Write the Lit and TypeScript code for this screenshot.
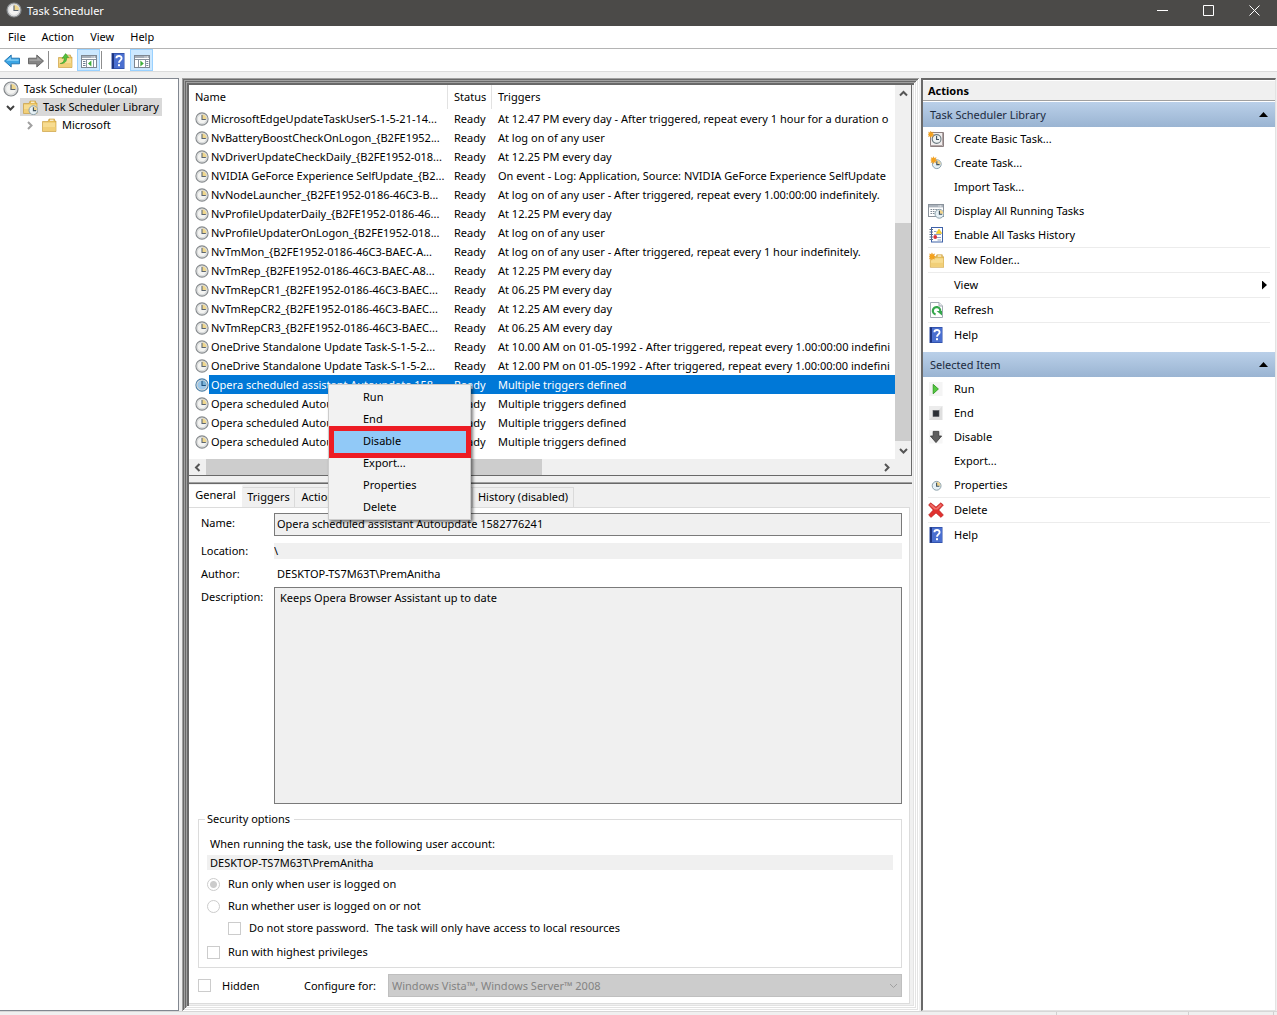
import { LitElement, html, css, svg, nothing, TemplateResult } from "lit";
import { customElement, property } from "lit/decorators.js";
import { classMap } from "lit/directives/class-map.js";

const clock = (face: string, slice: string, rim: string, hands: string) => svg`
  <circle cx="8" cy="8" r="7" fill="#e3e4e4" stroke=${rim} stroke-width="1.2"/>
  <circle cx="8" cy="8" r="5.4" fill=${face} stroke="#c4c8ca" stroke-width=".6"/>
  <path d="M8 8V2.8A5.2 5.2 0 0 1 13.2 8Z" fill=${slice}/>
  <path d="M8 3.4V8.5H12.4" fill="none" stroke=${hands} stroke-width="1.2"/>`;

const smallClock = (x: number, y: number) => svg`
  <circle cx=${x} cy=${y} r="4.4" fill="#e6f0f5" stroke="#8ba0aa"/>
  <path d="M${x} ${y}V${y - 3.8}A3.8 3.8 0 0 1 ${x + 3.8} ${y}Z" fill="#f3d48a"/>
  <path d="M${x} ${y - 3}V${y + 0.4}H${x + 2.8}" fill="none" stroke="#3d505c" stroke-width="1.1"/>`;

const folder = svg`
  <path d="M1.5 4.5H7L8 2H13.5V4H15V14.5H1.5Z" fill="#e6bd58" stroke="#c79b3a" stroke-width=".6"/>
  <path d="M9 3.2H12.5" stroke="#fff" stroke-width="1"/>
  <path d="M2 5.4H14.4V14H2Z" fill="#f7dc91"/>
  <path d="M2 10H14.4V14H2Z" fill="#f1cf78"/>`;

const star = svg`<path d="M4 0L5.1 2.4 7.8 1.3 6.7 3.9 9 5 6.6 6 7.5 8.6 5 7.6 3.8 10 2.9 7.5.4 8.4 1.5 5.9 0 4.8 1.5 3.8.7 1.4 3 2.4Z" fill="#f5a21c" stroke="#e48e12" stroke-width=".4"/>`;

const helpBook = svg`
  <path d="M1.5 0H14.5V16H1.5Z" fill="#2f4ea6"/>
  <path d="M4 .8H14V15.2H4Z" fill="#4a6fd0"/>
  <path d="M2 .5H4V15.5H2Z" fill="#1f3580"/>
  <path d="M6.4 5.2C6.4 2.4 11.6 2.2 11.6 5.2 11.6 7.4 9 7.4 9 9.8" fill="none" stroke="#fff" stroke-width="1.9"/>
  <rect x="8" y="11.2" width="2" height="2" fill="#fff"/>`;

const paneWindow = (arrow: string, divider: string, list: string) => svg`
  <rect x=".5" y="2.5" width="15" height="12" fill="#fff" stroke="#7e8792"/>
  <path d="M1 3H15V5H1Z" fill="#a4adb8"/>
  <path d="M10.5 4H11.5M12.5 4H14" stroke="#fff"/>
  <path d="M1 6.5H15" stroke="#8993a0"/>
  <path d=${divider} stroke="#8993a0"/>
  <path d=${list} stroke="#6f7f93"/>
  <path d=${arrow} fill="#3fae3a"/>`;

const arrowShape = "M.5 8L7.2 2V5.2H15.5V10.8H7.2V14Z";

const icons: Record<string, TemplateResult> = {
  clock: clock("#f3f3f1", "#efd78e", "#85898c", "#5c6670"),
  clockSelected: clock("#9cc8ea", "#79b2d8", "#4a7ea6", "#1f4e78"),
  folder,
  libraryFolder: svg`${folder}${smallClock(11.4, 11.2)}`,
  back: svg`<path d=${arrowShape} fill="#3aa5e4" stroke="#1d6fae" stroke-width=".9"/><path d="M2.4 7.8L6.8 4V6.4H14.6V7.8Z" fill="#8bd2f7"/>`,
  forward: svg`<g transform="matrix(-1 0 0 1 16 0)"><path d=${arrowShape} fill="#858585" stroke="#5f5f5f" stroke-width=".9"/><path d="M2.4 7.8L6.8 4V6.4H14.6V7.8Z" fill="#a9a9a9"/></g>`,
  upFolder: svg`${folder}<path d="M3.2 10.5C6.2 10 7.4 8 7.2 4.8L5 5.4 8.6.6 11.8 4.4 9.6 4.5C10 8.4 7.6 11 3.2 10.5Z" fill="#54c23c" stroke="#2f8f22" stroke-width=".5"/>`,
  treePane: paneWindow("M10.4 7.6V13.4L7 10.5Z", "M5.5 7V14M12.5 7V14", "M2 8.5H4.5M2 10.5H4.5M2 12.5H4.5"),
  actionPane: paneWindow("M6.4 7.6V13.4L9.8 10.5Z", "M4.5 7V14M11.5 7V14", "M12.3 8.5H14.3M12.3 10.5H14.3M12.3 12.5H14.3"),
  help: helpBook,
  basicTask: svg`<path d="M2.5 1.5H15.5V15.5H2.5Z" fill="#f1eeee" stroke="#8b7f80"/><path d="M2.5 14.5H14.5V2" fill="none" stroke="#b3a6a6"/><circle cx="8.6" cy="8" r="4.4" fill="#eef2f3" stroke="#6b7a80" stroke-width="1.1"/><path d="M8.6 5V8.5H11" fill="none" stroke="#3d505c" stroke-width="1.1"/><g transform="scale(.68)">${star}</g>`,
  createTask: svg`${smallClock(8.8, 9.2)}<g transform="translate(2.6 1.6) scale(.72)">${star}</g>`,
  running: svg`<rect x=".5" y="1.5" width="15" height="12" fill="#fff" stroke="#8a929b"/><path d="M1 2H15V4.4H1Z" fill="#aab2bb"/><path d="M10.5 3H14" stroke="#fff" stroke-dasharray="1 .6"/><path d="M2.5 6.5H10M2.5 8.5H7M2.5 10.5H7" stroke="#7e8994" stroke-dasharray="1.6 .8"/>${smallClock(11.4, 10.8)}`,
  history: svg`<rect x="3.5" y=".5" width="11" height="14.5" fill="#fff" stroke="#3f62a8"/><path d="M1.5 2.5H5M1.5 5H5M1.5 7.5H5M1.5 10H5M1.5 12.5H5" stroke="#5b6b82" stroke-width="1.1"/><path d="M6 4.5H8.5M6 7.5H13M6 10.5H13M9.5 13H13" stroke="#8da0c0"/><path d="M11 2L13.8 6.4H8.2Z" fill="#f7d429" stroke="#d8a90f" stroke-width=".5"/><circle cx="7.2" cy="10" r="1.9" fill="#d8333a"/>`,
  newFolder: svg`<g transform="translate(.8 .8)">${folder}</g><g transform="translate(1 .8) scale(.74)">${star}</g>`,
  refresh: svg`<path d="M2.5.5H11L14.5 4V15.5H2.5Z" fill="#fff" stroke="#a3abb3"/><path d="M11 .5V4H14.5" fill="#e8ecef" stroke="#a3abb3"/><path d="M7.6 12.4A3.7 3.7 0 1 1 12.2 9.4" fill="none" stroke="#33a64a" stroke-width="2.2"/><path d="M8.6 9H14V13.6Z" fill="#33a64a"/>`,
  run: svg`<rect x="1" y="1" width="13.5" height="14" fill="#f4f4f4"/><path d="M5.2 3.4L10.4 8 5.2 12.8Z" fill="#55c940" stroke="#2f9a22" stroke-width=".9"/>`,
  end: svg`<rect x="1" y="1" width="13.5" height="14" fill="#dfdfdf"/><path d="M1 1H14.5L1 15Z" fill="#ececec"/><rect x="5" y="5.5" width="6" height="6" fill="#2c2f35" stroke="#55585e" stroke-width=".6"/>`,
  disable: svg`<rect x="1" y="1" width="13.5" height="13.5" fill="#f6f6f6"/><path d="M5.2 2.4H10.8V7H13.6L8 13.6 2.4 7H5.2Z" fill="#5d5d5d" stroke="#333" stroke-width=".8"/>`,
  properties: smallClock(8.6, 8.8),
  remove: svg`<path d="M2.6.8L8 5 12.8.8 15.4 3 10.8 8 15.4 13 13 15.4 8 11 3 15.4.6 13 5.2 8 .6 3Z" fill="#e0312f" stroke="#b51d1d" stroke-width=".6"/><path d="M2.7 1.8L8 6.2 12.8 1.9 14 3.1 9.6 7.6H6.4L1.8 3.1Z" fill="#f0726c"/>`,
};

const icon = (name: string) =>
  html`<svg class="icon" viewBox="0 0 16 16" aria-hidden="true">${icons[name]}</svg>`;

const chevron = (dir: "up" | "down" | "left" | "right" | "thin") => {
  const paths = {
    up: "M1 6.5L4.5 3 8 6.5",
    down: "M1 3L4.5 6.5 8 3",
    left: "M6.5 1L3 4.5 6.5 8",
    right: "M3 1L6.5 4.5 3 8",
    thin: "M1 3L4.5 6.5 8 3",
  };
  return html`<svg class="chevron" viewBox="0 0 9 9" aria-hidden="true">
    <path d=${paths[dir]} fill="none" stroke="currentColor" stroke-width=${dir === "thin" ? 1 : 2}></path>
  </svg>`;
};

const reset = css`
  * { box-sizing: border-box; }
  button, input, textarea, select {
    font: inherit; color: inherit; border: 0; margin: 0; padding: 0;
    background: none; border-radius: 0; text-align: left; outline: none;
  }
  ul { list-style: none; margin: 0; padding: 0; }
  .icon { width: 16px; height: 16px; flex: none; display: block; }
  .chevron { width: 9px; height: 9px; display: block; }
`;

interface Task { name: string; trigger: string; selected?: boolean; }

const TASKS: Task[] = [
  { name: "MicrosoftEdgeUpdateTaskUserS-1-5-21-14...", trigger: "At 12.47 PM every day - After triggered, repeat every 1 hour for a duration o" },
  { name: "NvBatteryBoostCheckOnLogon_{B2FE1952...", trigger: "At log on of any user" },
  { name: "NvDriverUpdateCheckDaily_{B2FE1952-018...", trigger: "At 12.25 PM every day" },
  { name: "NVIDIA GeForce Experience SelfUpdate_{B2...", trigger: "On event - Log: Application, Source: NVIDIA GeForce Experience SelfUpdate" },
  { name: "NvNodeLauncher_{B2FE1952-0186-46C3-B...", trigger: "At log on of any user - After triggered, repeat every 1.00:00:00 indefinitely." },
  { name: "NvProfileUpdaterDaily_{B2FE1952-0186-46...", trigger: "At 12.25 PM every day" },
  { name: "NvProfileUpdaterOnLogon_{B2FE1952-018...", trigger: "At log on of any user" },
  { name: "NvTmMon_{B2FE1952-0186-46C3-BAEC-A...", trigger: "At log on of any user - After triggered, repeat every 1 hour indefinitely." },
  { name: "NvTmRep_{B2FE1952-0186-46C3-BAEC-A8...", trigger: "At 12.25 PM every day" },
  { name: "NvTmRepCR1_{B2FE1952-0186-46C3-BAEC...", trigger: "At 06.25 PM every day" },
  { name: "NvTmRepCR2_{B2FE1952-0186-46C3-BAEC...", trigger: "At 12.25 AM every day" },
  { name: "NvTmRepCR3_{B2FE1952-0186-46C3-BAEC...", trigger: "At 06.25 AM every day" },
  { name: "OneDrive Standalone Update Task-S-1-5-2...", trigger: "At 10.00 AM on 01-05-1992 - After triggered, repeat every 1.00:00:00 indefini" },
  { name: "OneDrive Standalone Update Task-S-1-5-2...", trigger: "At 12.00 PM on 01-05-1992 - After triggered, repeat every 1.00:00:00 indefini" },
  { name: "Opera scheduled assistant Autoupdate 158...", trigger: "Multiple triggers defined", selected: true },
  { name: "Opera scheduled Autoupdate 158...", trigger: "Multiple triggers defined" },
  { name: "Opera scheduled Autoupdate 158...", trigger: "Multiple triggers defined" },
  { name: "Opera scheduled Autoupdate 158...", trigger: "Multiple triggers defined" },
];

@customElement("task-list")
export class TaskList extends LitElement {
  static styles = [reset, css`
    :host {
      display: grid; grid-template-columns: minmax(0, 1fr) 16px; grid-template-rows: 374px 16px;
      background: #f0f0f0; border: solid #696969; border-width: 0 1px 1px 0;
    }
    .rows { background: #fff; overflow: hidden; }
    table { width: 100%; table-layout: fixed; border-collapse: separate; border-spacing: 0; }
    .c-icon { width: 20px; }
    .c-name { width: 239px; }
    .c-status { width: 44px; }
    th { height: 24px; padding: 0 0 0 6px; font-weight: normal; text-align: left; border-right: 1px solid #e2e2e2; }
    th:last-child { border-right: 0; }
    td { height: 19px; padding: 0 0 0 6px; line-height: 18px; white-space: nowrap; overflow: hidden; }
    .mark { padding: 0; }
    .mark .icon { width: 14px; height: 14px; margin-left: 6px; }
    .name { padding-left: 2px; }
    .selected td:not(.mark) { background: #0078d7; color: #fff; }
    .vbar { display: grid; grid-template-rows: 17px 121px 218px 18px; }
    .hbar { display: grid; grid-template-columns: 17px 336px 1fr 18px; }
    .bar button { display: grid; place-items: center; color: #555; }
    .thumb { background: #cdcdcd; }
    .corner { background: #f0f0f0; }
  `];

  render() {
    return html`
      <div class="rows">
        <table>
          <colgroup><col class="c-icon"><col class="c-name"><col class="c-status"><col></colgroup>
          <thead><tr><th colspan="2" scope="col">Name</th><th scope="col">Status</th><th scope="col">Triggers</th></tr></thead>
          <tbody>
            ${TASKS.map((t) => html`
              <tr class=${classMap({ selected: !!t.selected })}>
                <td class="mark">${icon(t.selected ? "clockSelected" : "clock")}</td>
                <td class="name">${t.name}</td>
                <td>Ready</td>
                <td>${t.trigger}</td>
              </tr>`)}
          </tbody>
        </table>
      </div>
      <div class="bar vbar">
        <button aria-label="Scroll up">${chevron("up")}</button><span></span>
        <span class="thumb"></span>
        <button aria-label="Scroll down">${chevron("down")}</button>
      </div>
      <div class="bar hbar">
        <button aria-label="Scroll left">${chevron("left")}</button>
        <span class="thumb"></span><span></span>
        <button aria-label="Scroll right">${chevron("right")}</button>
      </div>
      <div class="corner"></div>`;
  }
}

@customElement("task-details")
export class TaskDetails extends LitElement {
  static styles = [reset, css`
    :host { display: flex; flex-direction: column; flex: 1; background: #f0f0f0; border-top: 1px solid #a0a0a0; box-shadow: inset 0 1px #696969; padding: 2px 2px 0 0; }
    .tabs { display: flex; align-items: flex-end; height: 22px; }
    .tab { height: 20px; padding: 0 4px 2px; border: 1px solid #dadada; border-width: 1px 1px 0 0; white-space: nowrap; text-align: center; width: 52px; }
    .tab.wide { width: 63px; }
    .tab.widest { width: 101px; }
    .tab.active { height: 22px; width: 54px; background: #fff; border-top-color: #fff; border-right-color: #f0f0f0; padding-bottom: 4px; }
    .page { flex: 1; display: flex; flex-direction: column; background: #fff; border: 1px solid #dcdcdc; border-left: 0; padding: 5px 7px 6px 9px; }
    .row { display: flex; }
    .row > label, .row > .label { width: 76px; flex: none; padding-left: 3px; }
    .row > input, .row > textarea { flex: 1; min-width: 0; }
    .gap { margin-bottom: 7px; }
    .top label { padding-top: 2px; }
    .boxed { height: 23px; border: 1px solid #7a7a7a; background: #f0f0f0; padding: 0 2px 2px; }
    .flat { height: 16px; background: #f0f0f0; line-height: 16px; }
    .author { height: 16px; margin: 0 0 5px; }
    .author .value { padding-left: 3px; }
    .grow { flex: 1; min-height: 120px; }
    .grow label { padding-top: 2px; }
    textarea { border: 1px solid #7a7a7a; background: #f0f0f0; resize: none; padding: 2px 5px; line-height: 16px; }
    fieldset { min-width: 0; margin: 7px 0 6px; padding: 9px 8px 4px; border: 1px solid #dcdcdc; }
    legend { padding: 0 4px 0 0; height: 16px; line-height: 16px; box-shadow: -2px 0 #fff; }
    .account { display: block; line-height: 16px; padding-left: 3px; }
    .field { display: block; width: 100%; height: 15px; margin: 3px 0; background: #f0f0f0; padding-left: 3px; }
    .choice { display: flex; align-items: center; gap: 8px; height: 22px; white-space: pre; }
    .choice.nested { padding-left: 21px; margin-bottom: 2px; }
    .choice input, .hidden input { appearance: none; width: 13px; height: 13px; border: 1px solid #ccc; background: #fff; flex: none; }
    .choice input[type="radio"] { border-radius: 50%; }
    .choice input[type="radio"]:checked { background: radial-gradient(#ccc 0 3px, #fff 4px); }
    .foot { display: flex; align-items: center; }
    .hidden { display: flex; align-items: center; gap: 11px; width: 106px; }
    .configure { width: 84px; }
    .select { flex: 1; display: grid; align-items: center; color: #a0a0a0; }
    .select > * { grid-area: 1 / 1; }
    .select .chevron { justify-self: end; margin-right: 4px; }
    select { appearance: none; width: 100%; height: 23px; background: #ccc; border: 1px solid #bfbfbf; color: #838383; padding: 0 3px; opacity: 1; }
  `];

  render() {
    const tabs = ["General", "Triggers", "Actions", "Conditions", "Settings", "History (disabled)"];
    return html`
      <div class="tabs" role="tablist">
        ${tabs.map((t, i) => html`<button role="tab" aria-selected=${i === 0}
          class=${classMap({ tab: true, active: i === 0, wide: i === 3 || i === 4, widest: i === 5 })}>${t}</button>`)}
      </div>
      <div class="page">
        <div class="row gap top"><label for="name">Name:</label><input id="name" class="boxed" readonly value="Opera scheduled assistant Autoupdate 1582776241"></div>
        <div class="row gap"><label for="loc">Location:</label><input id="loc" class="flat" readonly value="\\"></div>
        <div class="row author"><span class="label">Author:</span><span class="value">DESKTOP-TS7M63T\\PremAnitha</span></div>
        <div class="row grow"><label for="desc">Description:</label><textarea id="desc" readonly .value=${"Keeps Opera Browser Assistant up to date"}></textarea></div>
        <fieldset>
          <legend>Security options</legend>
          <label class="account" for="account">When running the task, use the following user account:</label>
          <input id="account" class="field" readonly value="DESKTOP-TS7M63T\\PremAnitha">
          <label class="choice"><input type="radio" name="logon" checked>Run only when user is logged on</label>
          <label class="choice"><input type="radio" name="logon">Run whether user is logged on or not</label>
          <label class="choice nested"><input type="checkbox">Do not store password.  The task will only have access to local resources</label>
          <label class="choice"><input type="checkbox">Run with highest privileges</label>
        </fieldset>
        <div class="foot">
          <label class="hidden"><input type="checkbox">Hidden</label>
          <label class="configure" for="target">Configure for:</label>
          <div class="select">
            <select id="target" disabled><option>Windows Vista™, Windows Server™ 2008</option></select>
            ${chevron("thin")}
          </div>
        </div>
      </div>`;
  }
}

interface Action { label: string; icon?: string; submenu?: boolean; divider?: boolean; }

@customElement("action-group")
export class ActionGroup extends LitElement {
  @property() heading = "";
  @property({ attribute: false }) items: Action[] = [];

  static styles = [reset, css`
    :host { display: block; }
    .heading { display: flex; align-items: center; justify-content: space-between; width: 100%; height: 25px; padding: 0 7px; background: linear-gradient(#bad0e9, #9ab4d2); color: #1b2a40; }
    .up { width: 9px; height: 5px; background: #000; clip-path: polygon(50% 0, 100% 100%, 0 100%); }
    li { padding: 0 5px; }
    .item { display: flex; align-items: center; gap: 10px; width: 100%; height: 24px; }
    .slot { width: 16px; }
    .divider { border-bottom: 1px solid #ececec; margin: 0 5px; padding: 0; }
    .more { width: 5px; height: 9px; margin-left: auto; margin-right: 3px; background: #000; clip-path: polygon(0 0, 100% 50%, 0 100%); }
  `];

  render() {
    return html`
      <button class="heading">${this.heading}<span class="up"></span></button>
      <ul>
        ${this.items.map((a) => html`
          <li class=${classMap({ divider: !!a.divider })}>
            <button class="item"><span class="slot">${a.icon ? icon(a.icon) : nothing}</span>${a.label}${a.submenu ? html`<span class="more"></span>` : nothing}</button>
          </li>`)}
      </ul>`;
  }
}

const LIBRARY_ACTIONS: Action[] = [
  { label: "Create Basic Task...", icon: "basicTask" },
  { label: "Create Task...", icon: "createTask" },
  { label: "Import Task..." },
  { label: "Display All Running Tasks", icon: "running" },
  { label: "Enable All Tasks History", icon: "history", divider: true },
  { label: "New Folder...", icon: "newFolder", divider: true },
  { label: "View", submenu: true, divider: true },
  { label: "Refresh", icon: "refresh", divider: true },
  { label: "Help", icon: "help" },
];

const ITEM_ACTIONS: Action[] = [
  { label: "Run", icon: "run" },
  { label: "End", icon: "end" },
  { label: "Disable", icon: "disable" },
  { label: "Export..." },
  { label: "Properties", icon: "properties", divider: true },
  { label: "Delete", icon: "remove", divider: true },
  { label: "Help", icon: "help" },
];

@customElement("app-root")
export class AppRoot extends LitElement {
  static styles = [reset, css`
    :host {
      display: flex; flex-direction: column; min-height: 100vh; box-sizing: border-box;
      font: 11px/16px "Noto Sans", "Open Sans", sans-serif; color: #000; background: #fff;
    }
    .title { display: flex; align-items: flex-start; height: 26px; padding: 2px 0 0 6px; background: #4b4a48; color: #fff; }
    .title h1 { font: inherit; line-height: 18px; margin: 0 auto 0 5px; }
    .title button { width: 46px; height: 16px; display: grid; place-items: center; }
    .title svg.glyph { width: 11px; height: 11px; fill: none; stroke: #fff; }
    .menu { display: flex; height: 23px; padding-left: 8px; gap: 16px; border-bottom: 1px solid #b4b4b4; }
    .tools { display: flex; align-items: center; gap: 1px; height: 23px; border-bottom: 1px solid #dcdcdc; }
    .tools button { width: 23px; height: 22px; padding-top: 2px; display: grid; place-items: center; }
    .tools .on { background: #cce8ff; border: 1px solid #99d1ff; }
    .tools .sep { width: 1px; height: 18px; background: #8d8d8d; margin-right: 3px; }
    .body { flex: 1; display: grid; grid-template-columns: 179px minmax(0, 1fr) 355px; padding: 6px 1px 0 0; background: #f0f0f0; }
    .tree { background: #fff; border: 1px solid #828790; border-left: 0; padding: 0; }
    .node { display: flex; align-items: center; height: 18px; }
    .node button { display: flex; align-items: center; gap: 5px; height: 18px; padding: 0 3px 0 2px; }
    .node .twist { width: 20px; padding: 0 0 0 6px; color: #404040; }
    .node.child { padding-left: 19px; }
    .node.child .twist { color: #a0a0a0; }
    .node .current { background: #d9d9d9; }
    .root { height: 19px; padding-left: 1px; }
    .frame {
      position: relative; display: flex; flex-direction: column; margin: 0 2px 0 3px; padding: 7px;
      background: #f0f0f0;
      box-shadow:
        inset 1px 1px #a0a0a0, inset -1px -1px #fff,
        inset 2px 2px #696969, inset -2px -2px #e3e3e3,
        inset 3px 3px #a0a0a0, inset -3px -3px #fff,
        inset 4px 4px #696969, inset -4px -4px #e3e3e3,
        inset 5px 5px #a0a0a0, inset -5px -5px #fff,
        inset 7px 7px #696969, inset -6px -6px #e3e3e3;
    }
    task-list { margin-bottom: 6px; }
    .context { position: absolute; left: 146px; top: 306px; width: 143px; padding: 1px; background: #f2f2f2; border: 1px solid #ccc; box-shadow: 2px 2px 3px rgba(0, 0, 0, .5); }
    .context button { display: block; width: 100%; height: 22px; padding-left: 33px; }
    .context .hot { position: relative; background: #91c9f7; }
    .hot::after { content: ""; position: absolute; inset: -4px -2px -6px -1px; border: 5px solid #ed1c24; box-shadow: inset 0 0 0 1px #91c9f7; pointer-events: none; }
    .actions { background: #fff; border: 1px solid #696969; border-width: 2px 1px 1px 2px; border-right-color: #e3e3e3; border-bottom-color: #e3e3e3; }
    .actions h2 { font-size: inherit; line-height: 19px; height: 20px; margin: 1px 0; padding-left: 5px; background: #f0f0f0; border-bottom: 1px solid #a0a0a0; }
    action-group + action-group { margin-top: 5px; }
    .status { height: 4px; display: flex; justify-content: flex-end; background: #f0f0f0; border-top: 1px solid #d7d7d7; }
    .status span { border-right: 1px solid #d0d0d0; width: 132px; }
    .status span:last-child { width: 85px; margin-right: 3px; }
  `];

  render() {
    const context = ["Run", "End", "Disable", "Export...", "Properties", "Delete"];
    return html`
      <header class="title">
        ${icon("clock")}<h1>Task Scheduler</h1>
        <button aria-label="Minimize"><svg class="glyph" viewBox="0 0 11 11"><path d="M0 5.5H11"></path></svg></button>
        <button aria-label="Maximize"><svg class="glyph" viewBox="0 0 11 11"><path d="M.5 .5H10.5V10.5H.5Z"></path></svg></button>
        <button aria-label="Close"><svg class="glyph" viewBox="0 0 11 11"><path d="M.5 .5L10.5 10.5M10.5 .5L.5 10.5"></path></svg></button>
      </header>
      <nav class="menu">${["File", "Action", "View", "Help"].map((m) => html`<button>${m}</button>`)}</nav>
      <div class="tools" role="toolbar">
        <button aria-label="Back">${icon("back")}</button>
        <button aria-label="Forward">${icon("forward")}</button>
        <span class="sep"></span>
        <button aria-label="Up one level">${icon("upFolder")}</button>
        <button class="on" aria-label="Console tree">${icon("treePane")}</button>
        <span class="sep"></span>
        <button aria-label="Help">${icon("help")}</button>
        <button class="on" aria-label="Action pane">${icon("actionPane")}</button>
      </div>
      <main class="body">
        <nav class="tree">
          <div class="node root"><button>${icon("clock")}Task Scheduler (Local)</button></div>
          <div class="node"><button class="twist" aria-label="Collapse">${chevron("down")}</button><button class="current">${icon("libraryFolder")}Task Scheduler Library</button></div>
          <div class="node child"><button class="twist" aria-label="Expand">${chevron("right")}</button><button>${icon("folder")}Microsoft</button></div>
        </nav>
        <section class="frame">
          <task-list></task-list>
          <task-details></task-details>
          <div class="context" role="menu">
            ${context.map((c) => html`<button role="menuitem" class=${classMap({ hot: c === "Disable" })}>${c}</button>`)}
          </div>
        </section>
        <aside class="actions">
          <h2>Actions</h2>
          <action-group heading="Task Scheduler Library" .items=${LIBRARY_ACTIONS}></action-group>
          <action-group heading="Selected Item" .items=${ITEM_ACTIONS}></action-group>
        </aside>
      </main>
      <footer class="status"><span></span><span></span><span></span></footer>`;
  }
}
